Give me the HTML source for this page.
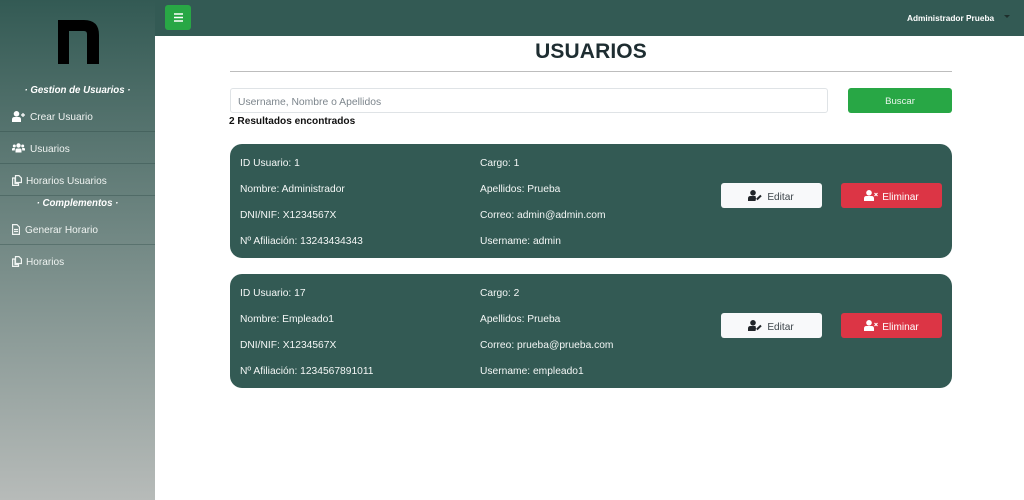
<!DOCTYPE html>
<html lang="es"><head><meta charset="utf-8"><title>Usuarios</title>
<style>
*{box-sizing:border-box}
html,body{margin:0;padding:0;width:1024px;height:500px;overflow:hidden;background:#fff;font-family:"Liberation Sans",sans-serif;color:#212529}
.a{position:absolute;white-space:nowrap}
#side{left:0;top:0;width:155px;height:500px;background:linear-gradient(#335a54,#b7bbb9)}
#top{left:155px;top:0;width:869px;height:36px;background:#335a54}
.head{color:#fff;font-weight:bold;font-style:italic;font-size:9.7px;line-height:14px;text-align:center;left:0;width:155px}
.item{color:#f0f4f2;font-size:10.1px;line-height:14px}
.sep{left:0;width:155px;height:1px;background:rgba(40,70,65,.35)}
.card{left:230px;width:722px;height:114px;background:#335a54;border-radius:12px}
.t{color:#f4f7f6;font-size:10.25px;line-height:14px}
.btn{width:101px;height:25px;border-radius:3px;font-size:10.1px;line-height:29px;text-align:center}
.w{background:#f8f9fa;color:#3c4449}
.r{background:#dc3545;color:#fff}
svg{position:absolute;display:block}
</style></head><body>
<div class="a" id="side"></div>
<div class="a" id="top"></div>

<svg style="left:58px;top:20px" width="41" height="44" viewBox="0 0 41 44"><path d="M0 44V0H26Q41 0 41 15V44H29V14Q29 11 26 11H11V44Z" fill="#000"/></svg>

<div class="a" style="left:165px;top:5px;width:26px;height:25px;background:#28a745;border-radius:3px"></div>
<svg style="left:174px;top:13px" width="9" height="9" viewBox="0 0 9 9"><path d="M0 1H9M0 4.500H9M0 8H9" stroke="#fff" stroke-width="1.500"/></svg>
<div class="a" style="left:907px;top:11px;color:#fff;font-weight:bold;font-size:8.3px;line-height:14px">Administrador Prueba</div>
<div class="a" style="left:1004px;top:15px;width:0;height:0;border:3px solid transparent;border-top:3px solid #1f2f2c;border-bottom:0"></div>

<div class="a head" style="top:84px">· Gestion de Usuarios ·</div>
<svg style="left:12px;top:111px" width="13" height="11" viewBox="0 0 13 11"><circle cx="4.500" cy="2.800" r="2.800" fill="#fff"/><path d="M0 11V8.500Q0 6 2.500 6H6.500Q9 6 9 8.500V11Z" fill="#fff"/><path d="M9 4H13M11 2V6" stroke="#fff" stroke-width="1.200"/></svg>
<div class="a item" style="left:30px;top:111px">Crear Usuario</div>
<div class="a sep" style="top:131px"></div>
<svg style="left:12px;top:143px" width="13" height="10" viewBox="0 0 13 10"><circle cx="6.500" cy="2.500" r="2.200" fill="#fff"/><circle cx="2.300" cy="3" r="1.500" fill="#fff"/><circle cx="10.700" cy="3" r="1.500" fill="#fff"/><path d="M3.500 9.500V7Q3.500 5.500 5 5.500H8Q9.500 5.500 9.500 7V9.500ZM0 7.500V6Q0 5 1 5H3L2.700 7.500ZM13 7.500V6Q13 5 12 5H10L10.300 7.500Z" fill="#fff"/></svg>
<div class="a item" style="left:30px;top:143px">Usuarios</div>
<div class="a sep" style="top:163px"></div>
<svg style="left:12px;top:175px" width="10" height="11" viewBox="0 0 10 11"><path d="M3.500.6H7L9.400 3V7.500H3.500ZM.6 3H3V8.500H6.500V10.400H.6Z" fill="none" stroke="#f0f4f2" stroke-width="1.200"/></svg>
<div class="a item" style="left:26px;top:175px">Horarios Usuarios</div>
<div class="a sep" style="top:195px"></div>
<div class="a head" style="top:197px">· Complementos ·</div>
<svg style="left:12px;top:224px" width="8" height="11" viewBox="0 0 8 11"><path d="M.6.6H5L7.400 3V10.400H.6ZM2 5.500H6M2 7.500H6" fill="none" stroke="#f0f4f2" stroke-width="1.200"/></svg>
<div class="a item" style="left:25px;top:224px">Generar Horario</div>
<div class="a sep" style="top:244px"></div>
<svg style="left:12px;top:256px" width="10" height="11" viewBox="0 0 10 11"><path d="M3.500.6H7L9.400 3V7.500H3.500ZM.6 3H3V8.500H6.500V10.400H.6Z" fill="none" stroke="#f0f4f2" stroke-width="1.200"/></svg>
<div class="a item" style="left:26px;top:256px">Horarios</div>

<div class="a" style="left:230px;width:722px;top:37px;text-align:center;font-weight:bold;font-size:21px;line-height:30px;color:#1e2d31;letter-spacing:.1px">USUARIOS</div>
<div class="a" style="left:230px;top:71px;width:722px;height:1px;background:#bdbdbd"></div>

<div class="a" style="left:230px;top:88px;width:598px;height:25px;border:1px solid #dfe3e6;border-radius:3px"></div>
<div class="a" style="left:238px;top:96px;font-size:10.35px;line-height:14px;color:#7c858c">Username, Nombre o Apellidos</div>
<div class="a" style="left:848px;top:88px;width:104px;height:25px;background:#28a745;border-radius:3px;color:#e9f5ec;text-align:center;font-size:9.6px;line-height:27px">Buscar</div>
<div class="a" style="left:229px;top:115px;font-weight:bold;font-size:10.1px;line-height:14px;color:#111">2 Resultados encontrados</div>

<div class="a card" style="top:144px"></div>
<div class="a t" style="left:240px;top:157px">ID Usuario: 1</div>
<div class="a t" style="left:480px;top:157px">Cargo: 1</div>
<div class="a t" style="left:240px;top:183px">Nombre: Administrador</div>
<div class="a t" style="left:480px;top:183px">Apellidos: Prueba</div>
<div class="a t" style="left:240px;top:209px">DNI/NIF: X1234567X</div>
<div class="a t" style="left:480px;top:209px">Correo: admin@admin.com</div>
<div class="a t" style="left:240px;top:235px">Nº Afiliación: 13243434343</div>
<div class="a t" style="left:480px;top:235px">Username: admin</div>
<div class="a btn w" style="left:721px;top:183px;padding-left:18px">Editar</div>
<svg style="left:748px;top:190px" width="14" height="11" viewBox="0 0 14 11"><circle cx="5" cy="2.800" r="2.800" fill="#212529"/><path d="M0 11V8.500Q0 6 2.500 6H7.500L8 8.500 7.500 11Z" fill="#212529"/><path d="M8.800 9.500L13 5.500" stroke="#212529" stroke-width="2"/></svg>
<div class="a btn r" style="left:841px;top:183px;padding-left:18px">Eliminar</div>
<svg style="left:864px;top:190px" width="14" height="11" viewBox="0 0 14 11"><circle cx="5" cy="2.800" r="2.800" fill="#fff"/><path d="M0 11V8.500Q0 6 2.500 6H7.500Q10 6 10 8.500V11Z" fill="#fff"/><path d="M10.500 3L13.500 6M13.500 3L10.500 6" stroke="#fff" stroke-width="1.100"/></svg>

<div class="a card" style="top:274px"></div>
<div class="a t" style="left:240px;top:287px">ID Usuario: 17</div>
<div class="a t" style="left:480px;top:287px">Cargo: 2</div>
<div class="a t" style="left:240px;top:313px">Nombre: Empleado1</div>
<div class="a t" style="left:480px;top:313px">Apellidos: Prueba</div>
<div class="a t" style="left:240px;top:339px">DNI/NIF: X1234567X</div>
<div class="a t" style="left:480px;top:339px">Correo: prueba@prueba.com</div>
<div class="a t" style="left:240px;top:365px">Nº Afiliación: 1234567891011</div>
<div class="a t" style="left:480px;top:365px">Username: empleado1</div>
<div class="a btn w" style="left:721px;top:313px;padding-left:18px">Editar</div>
<svg style="left:748px;top:320px" width="14" height="11" viewBox="0 0 14 11"><circle cx="5" cy="2.800" r="2.800" fill="#212529"/><path d="M0 11V8.500Q0 6 2.500 6H7.500L8 8.500 7.500 11Z" fill="#212529"/><path d="M8.800 9.500L13 5.500" stroke="#212529" stroke-width="2"/></svg>
<div class="a btn r" style="left:841px;top:313px;padding-left:18px">Eliminar</div>
<svg style="left:864px;top:320px" width="14" height="11" viewBox="0 0 14 11"><circle cx="5" cy="2.800" r="2.800" fill="#fff"/><path d="M0 11V8.500Q0 6 2.500 6H7.500Q10 6 10 8.500V11Z" fill="#fff"/><path d="M10.500 3L13.500 6M13.500 3L10.500 6" stroke="#fff" stroke-width="1.100"/></svg>
</body></html>
